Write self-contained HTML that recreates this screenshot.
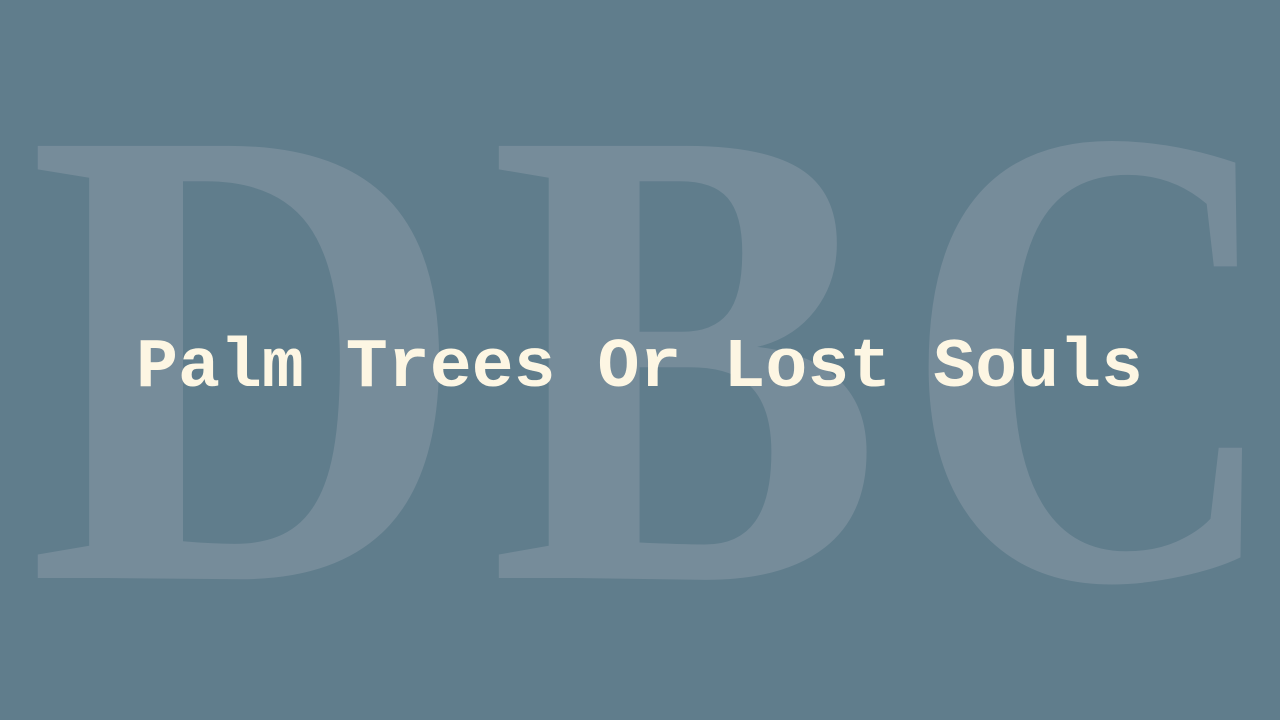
<!DOCTYPE html>
<html><head><meta charset="utf-8"><style>
html,body{margin:0;padding:0;width:1280px;height:720px;overflow:hidden;background:#607d8c;}
svg{position:absolute;left:0;top:0}
</style></head><body>
<svg width="1280" height="720" xmlns="http://www.w3.org/2000/svg">
<rect width="1280" height="720" fill="#607d8c"/>
<g font-family="Liberation Serif, serif" font-weight="bold" font-size="660" fill="#768c9a">
<text x="27" y="578" textLength="442" lengthAdjust="spacingAndGlyphs">D</text>
<text x="489" y="578" textLength="394" lengthAdjust="spacingAndGlyphs">B</text>
<text x="903" y="578" textLength="379" lengthAdjust="spacingAndGlyphs">C</text>
</g>
<text x="136" y="386" font-family="Liberation Mono, monospace" font-weight="bold" font-size="70" fill="#fdf6e3" textLength="1007" lengthAdjust="spacingAndGlyphs">Palm Trees Or Lost Souls</text>
</svg>
</body></html>
